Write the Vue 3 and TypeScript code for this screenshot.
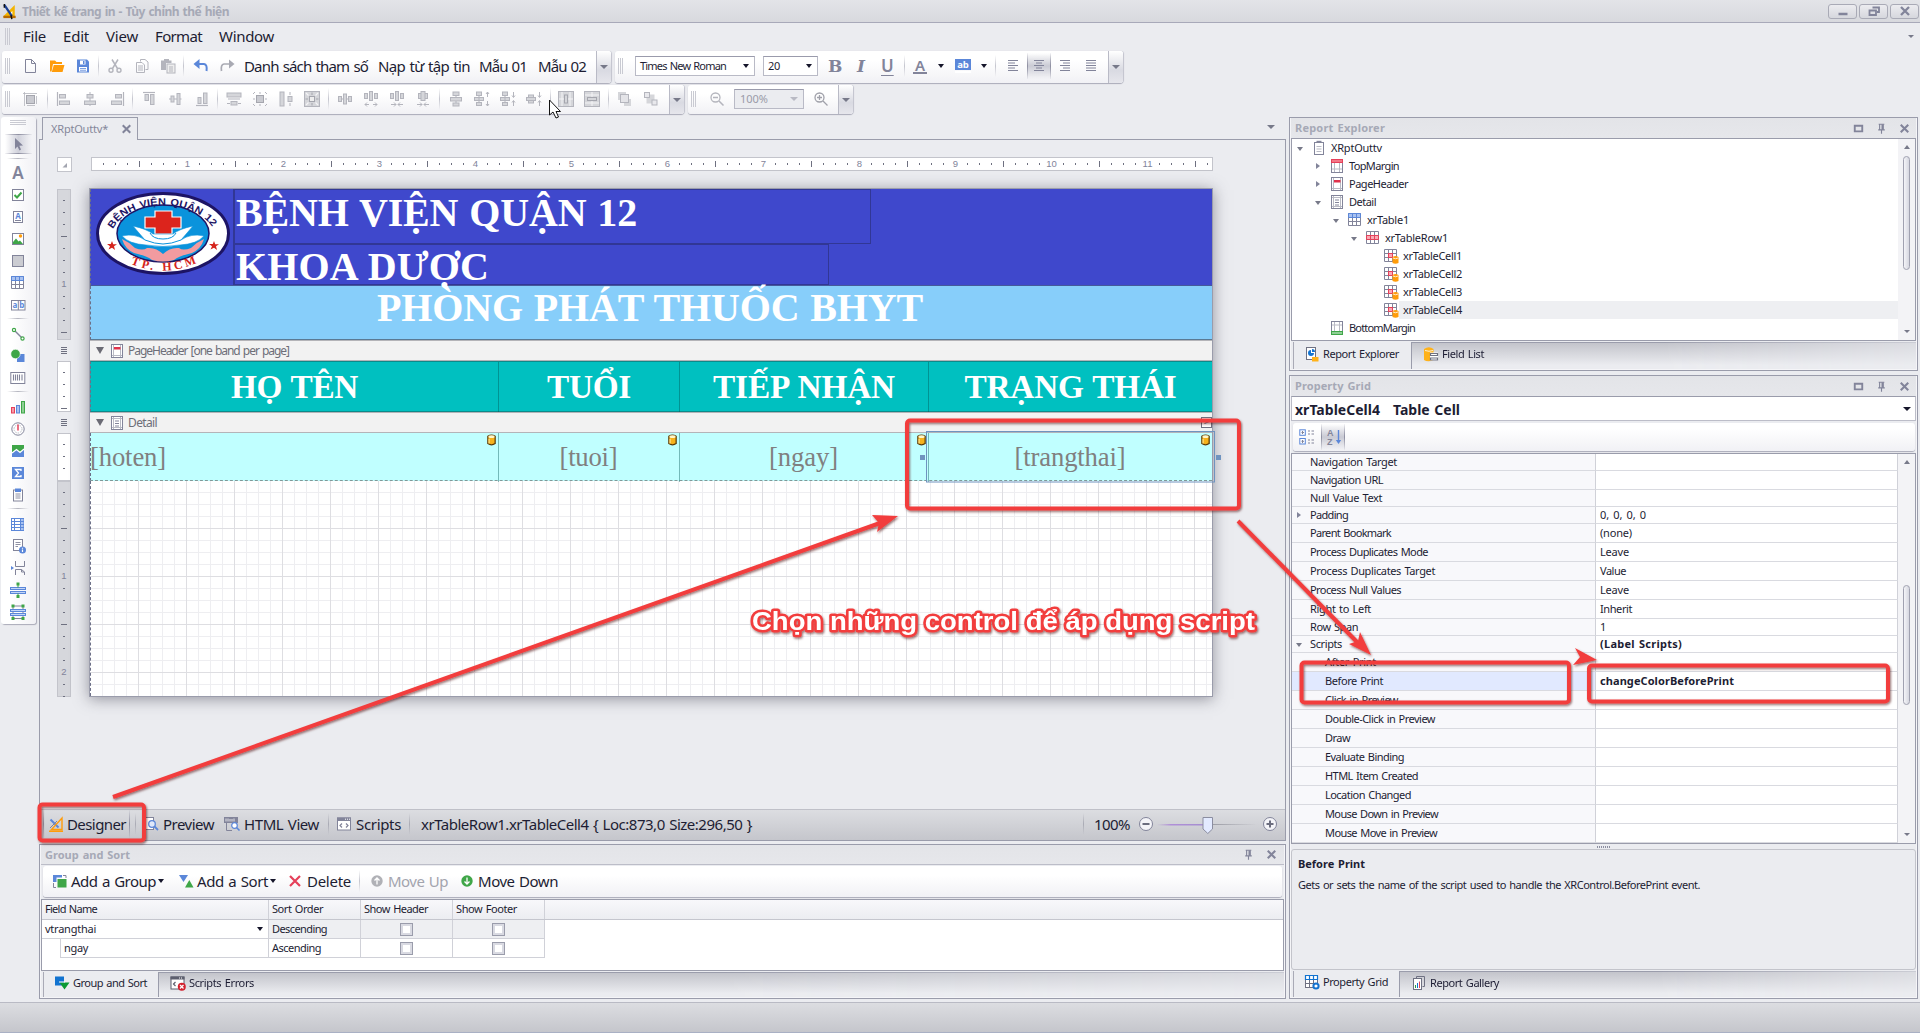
<script setup lang="ts">
import type { Directive } from 'vue'

// Spreads a label over its nominal width by adjusting the letter spacing.
const vFit: Directive<HTMLElement, number> = {
  mounted(el, { value }) {
    const n = (el.textContent ?? '').length
    const w = el.getBoundingClientRect().width
    if (n && w && value) el.style.letterSpacing = `${(value - w) / n}px`
  },
}

const G = '#82849a'
const D = '#b4b5bd'
const B = '#5b87d9'
const GR = '#3fa648'
const R = '#e5405a'
const O = '#ff9c0a'
const s = (c: string, d: string, w = 1) => `<path d="${d}" fill="none" stroke="${c}" stroke-width="${w}"/>`
const f = (c: string, d: string) => `<path d="${d}" fill="${c}"/>`
const r = (c: string, x: number, y: number, w: number, h: number, st = '') =>
  `<rect x="${x}" y="${y}" width="${w}" height="${h}" fill="${c}"${st ? ` stroke="${st}"` : ''}/>`
const cellGrid = s(G, 'M1.5 1.5H13.5V13.5H1.5ZM1.5 5.5H13.5M1.5 9.5H13.5M5.5 1.5V13.5M9.5 1.5V13.5')
const LG = '#d5d6da'

const icons: Record<string, string> = {
  app: f('#f4b400', 'M1 14L13 2V15H1Z') + f('#b86a00', 'M1 13.500H14V16H1Z') + f('#fff', 'M7 12L10.500 8.500V12Z') + s('#1b3f94', 'M2 2L10 14', 2.400) + s('#111', 'M2 1V5M9 13L10 17', 1.500),
  doc: s(G, 'M3.500 1.500H9.500L13.500 5.500V14.500H3.500ZM9.500 1.500V5.500H13.500'),
  folder: f(O, 'M1 2.500H6L7.500 4H13V6H4L2.500 13.500H1Z') + f(O, 'M4.800 7H15.500L13.500 14H2.800Z'),
  save: f(B, 'M2 1.500H12L14 3.500V14.500H2Z') + r('#fff', 5, 2.500, 5.500, 4) + r(B, 8, 3, 1.500, 3) + r('#fff', 4, 9, 8, 4.500) + r(B, 5, 10.200, 6, .8) + r(B, 5, 11.800, 6, .8),
  cut: s(D, 'M5 1.500L10.500 10.500M11 1.500L5.500 10.500', 1.500) + `<circle cx="4" cy="12.300" r="2" fill="none" stroke="${D}" stroke-width="1.400"/><circle cx="12" cy="12.300" r="2" fill="none" stroke="${D}" stroke-width="1.400"/>`,
  copy: s(D, 'M6.500 3.500V1.500H11L14 4V11.500H11.500') + s(D, 'M2.500 4.500H8L10.500 7V14.500H2.500Z') + s(D, 'M4 8H9M4 10H9M4 12H9'),
  paste: f(D, 'M1 2.500H4V1H9V2.500H11.500V5H6V12H1Z') + r('#eee', 7, 6, 8, 9, D) + s(D, 'M9 9H13M9 11H13M9 13H13'),
  undo: s(B, 'M4 6H11Q14.500 6.500 13.500 13', 2) + f(B, 'M.5 6L6.500 1V11Z'),
  redo: s('#a9aab3', 'M12 6H5Q1.500 6.500 2.500 13', 1.700) + f('#a9aab3', 'M15.500 6L10 1.500V10.500Z'),
  hl: r(B, 0, 1, 16, 11) + '<text x="8" y="9.500" font-size="9.500" font-weight="700" font-family="Open Sans, sans-serif" fill="#fff" text-anchor="middle">ab</text>' + r('#fff', 0, 13, 16, 2),
  al: s(G, 'M3 2.500H13M3 5H10M3 7.500H13M3 10H10M3 12.500H13', 1.200),
  ac: s(G, 'M3 2.500H13M5 5H11M3 7.500H13M5 10H11M3 12.500H13', 1.200),
  ar: s(G, 'M3 2.500H13M6 5H13M3 7.500H13M6 10H13M3 12.500H13', 1.200),
  aj: s(G, 'M3 2.500H13M3 5H13M3 7.500H13M3 10H13M3 12.500H13', 1.200),
  l0: r('#c9cad0', 4.500, 4.500, 8, 8, '#a5a6ae') + s(D, 'M1 2.500H15M2.500 1V15', .8) + s(D, 'M14.500 5V13M5 14.500H13', .8),
  l1: s(D, 'M1.500 1V15', 1.200) + r(LG, 3.500, 3.500, 6, 3.500, D) + r(LG, 3.500, 10, 10, 3.500, D),
  l2: r(LG, 5, 3.500, 6, 3.500, D) + r(LG, 2.500, 10, 11, 3.500, D) + s(D, 'M8 1V3M8 7V10M8 13V15'),
  l3: s(D, 'M14.500 1V15', 1.200) + r(LG, 6.500, 3.500, 6, 3.500, D) + r(LG, 2.500, 10, 10, 3.500, D),
  l4: s(D, 'M2 1.500H14', 1.200) + r(LG, 4, 3.500, 3.500, 6, D) + r(LG, 9.500, 3.500, 3.500, 10, D),
  l5: r(LG, 4, 5, 3, 6, D) + r(LG, 10, 2.500, 3, 11, D) + s(D, 'M2 8H4M7 8H10M13 8H14.500'),
  l6: s(D, 'M2 14.500H14', 1.200) + r(LG, 4, 6.500, 3, 6, D) + r(LG, 9.500, 2, 3.500, 10.500, D),
  l7: r(LG, 1, 2, 14, 4, D) + r(LG, 5, 10.500, 6, 3.500, D) + s(D, 'M1 12.500H4M12 12.500H15M2 8H14', 1),
  l8: r('#c9cad0', 4.500, 4.500, 7, 7, '#a5a6ae') + s(D, 'M1 8H3M13 8H15M8 1V3M8 13V15M1 3L3 1M13 1L15 3M1 13L3 15M13 15L15 13'),
  l9: r(LG, 2, 1, 4, 14, D) + r(LG, 10, 5.500, 4, 5, D) + s(D, 'M12 1V4M12 12V15'),
  l10: r(LG, .5, .5, 15, 15, D) + r('#eee', 5.500, 5.500, 5, 5, '#a5a6ae') + s('#a5a6ae', 'M8 1.500V4M8 12V14.500M1.500 8H4M12 8H14.500') + s('#f4f4f6', 'M2 2L4.500 4.500M11.500 4.500L14 2M2 14L4.500 11.500M11.500 11.500L14 14', 1.300),
  l11: r(LG, 1.500, 5.500, 3, 5, D) + r(LG, 6.500, 3, 3, 10, D) + r(LG, 11.500, 5.500, 3, 5, D) + s(D, 'M4 8H7M9 8H12'),
  l12: r(LG, 1.500, 2.500, 3, 5, D) + r(LG, 6.500, .5, 3, 9, D) + r(LG, 11.500, 2.500, 3, 5, D) + s(D, 'M2 13.500H6M10 13.500H14M4 11.500L2 13.500L4 15.500M12 11.500L14 13.500L12 15.500'),
  l13: r(LG, 1.500, 2.500, 3, 5, D) + r(LG, 6.500, .5, 3, 9, D) + r(LG, 11.500, 2.500, 3, 5, D) + s(D, 'M2 13.500H7M9 13.500H14M5 11.500L7 13.500L5 15.500M11 11.500L9 13.500L11 15.500'),
  l14: r(LG, 3.500, 2.500, 9, 5, D) + r(LG, 6, .5, 4, 9, D) + s(D, 'M2 13.500H7M9 13.500H14M5 11.500L7 13.500L5 15.500M11 11.500L9 13.500L11 15.500'),
  v0: r(LG, 5, 1, 6, 3.500, D) + r(LG, 2.500, 6.500, 11, 3.500, D) + r(LG, 5, 12, 6, 3, D) + s(D, 'M8 4V7M8 10V12'),
  v1: r(LG, 2.500, 1, 5, 3.500, D) + r(LG, .5, 6.500, 9, 3, D) + r(LG, 2.500, 11.500, 5, 3, D) + s(D, 'M13.500 1V6M13.500 10V15M12 3L13.500 1L15 3M12 13L13.500 15L15 13M5 4V12'),
  v2: r(LG, 2.500, 1, 5, 3.500, D) + r(LG, .5, 6.500, 9, 3, D) + r(LG, 2.500, 11.500, 5, 3, D) + s(D, 'M13.500 1V6M13.500 10V15M12 4.500L13.500 6.500L15 4.500M12 11.500L13.500 9.500L15 11.500M5 4V12'),
  v3: r(LG, 2.500, 4, 5, 8, D) + r(LG, .5, 6.500, 9, 3, D) + s(D, 'M13.500 1V6M13.500 10V15M12 4.500L13.500 6.500L15 4.500M12 11.500L13.500 9.500L15 11.500'),
  c0: r(LG, .5, .5, 15, 15, D) + s('#f4f4f6', 'M4 1V15M1 8H15M12 1V15', 1) + r(LG, 6.500, 4, 3, 8, '#a5a6ae'),
  c1: r(LG, .5, .5, 15, 15, D) + s('#f4f4f6', 'M8 1V15M1 4H15M1 12H15', 1) + r(LG, 3.500, 6.500, 9, 3, '#a5a6ae'),
  z0: r(LG, 1.500, 1.500, 7, 7, LG) + r(LG, 7.500, 8.500, 6, 6, LG) + r('#e4e4e8', 3.500, 3.500, 8, 8, D),
  z1: r(LG, 4, 4, 7, 8, LG) + r('#e8e8ec', 1.500, 1.500, 5, 5, D) + r('#e8e8ec', 9, 9, 5, 5, D),
  zm: `<circle cx="6.500" cy="6.500" r="4.500" fill="none" stroke="${D}" stroke-width="1.300"/>` + s(D, 'M4 6.500H9M10 10L14.500 14.500', 1.500),
  zp: `<circle cx="6.500" cy="6.500" r="4.500" fill="none" stroke="#a0a1aa" stroke-width="1.300"/>` + s('#a0a1aa', 'M4 6.500H9M6.500 4V9M10 10L14.500 14.500', 1.300),
  ptr: f(G, 'M5 2V13L7.500 10.500L9.500 14.500L11 13.500L9.300 9.800L13 9.500Z'),
  check: r('#fff', 2.500, 2.500, 11, 11, G) + s(GR, 'M4.500 8L7 10.500L11.500 5.500', 2),
  rich: r('#fff', 3.500, 2.500, 9, 11, G) + '<text x="8" y="9.500" font-size="8" font-weight="700" font-family="Open Sans, sans-serif" fill="#5b87d9" text-anchor="middle">A</text>' + s(G, 'M5 11.500H11'),
  pic: r('#fff', 2.500, 2.500, 11, 11, G) + f(GR, 'M3 11L6 7.500L8.500 10.500L10 9.500L13 13H3Z') + `<circle cx="10.500" cy="5" r="1.700" fill="${O}"/>`,
  panel: r('#cbccd2', 2.500, 2.500, 11, 11, G),
  table: r('#fff', 2, 2, 12, 12) + r('#a9c2f0', 2, 2, 12, 3.500) + cellGrid + s(B, 'M1.500 5.500V1.500H13.500V5.500ZM5.500 1.500V5.500M9.500 1.500V5.500'),
  comb: r('#fff', 1.500, 3.500, 13.500, 9.500, G) + s(G, 'M8.300 3V13') + '<text x="5" y="11" font-size="8" font-weight="700" font-family="Open Sans, sans-serif" fill="#5b87d9" text-anchor="middle">a</text><text x="11.700" y="11" font-size="8" font-weight="700" font-family="Open Sans, sans-serif" fill="#5b87d9" text-anchor="middle">b</text>',
  line: s(G, 'M4 4L12 12', 1.500) + `<circle cx="4" cy="4" r="1.600" fill="#fff" stroke="${GR}" stroke-width="1.200"/><circle cx="12.500" cy="12.500" r="1.600" fill="#fff" stroke="${GR}" stroke-width="1.200"/>`,
  shape: r(B, 7, 6, 7.500, 8) + `<circle cx="5.500" cy="6" r="4.700" fill="${GR}" stroke="#fff" stroke-width=".6"/>`,
  bar: r('#fff', .8, 2.500, 14, 11, G) + s(G, 'M3.500 4.500V10.500M5.500 4.500V10.500M7.500 4.500V10.500M9.500 4.500V10.500M12 4.500V10.500', 1.100),
  chart: r('#f39aa8', 1.500, 8.500, 3, 5.500, R) + r('#a9c2f0', 6.500, 6.500, 3, 7.500, B) + r('#8fcf95', 11.500, 2.500, 3, 11.500, GR),
  gauge: `<circle cx="8" cy="8" r="6.200" fill="#fff" stroke="${G}"/><circle cx="8" cy="8" r="4" fill="none" stroke="#b9bac4" stroke-dasharray="1.500 1"/>` + s(R, 'M8 3.500V9.500', 1.500),
  spark: r(B, 2, 2, 12, 12) + f(GR, 'M2 2H14V6L10.500 9.500L6.500 6.500L2 10Z') + s('#fff', 'M2 10L6.500 6.500L10 9.500L14 6', 1.300),
  sigma: r(B, 2, 2, 12, 12) + s('#fff', 'M11 6V4.500H5.500L8.500 8L5.500 11.500H11V10', 1.300),
  clip: r('#fff', 3.500, 3, 9, 11, G) + r(B, 5, 1.500, 6, 3.500) + s(G, 'M5.500 7H10.500M5.500 9H10.500M5.500 11H10.500', .9),
  tbl2: r('#fff', 1.500, 2.500, 12, 12, B) + r('#a9c2f0', 10.500, 3, 3, 11) + s(B, 'M2 5.500H14M2 8.500H14M2 11.500H14') + s(B, 'M4.500 2V14M10.500 2V14'),
  info: r('#fff', 3.500, 1.500, 9, 11, G) + s(G, 'M5.500 4.500H10.500M5.500 6.500H10.500M5.500 8.500H8', .9) + `<circle cx="12.500" cy="12" r="3.500" fill="${B}"/>` + s('#fff', 'M12.500 9.800V10.800M12.500 11.500V14', 1.200),
  brk: f(B, 'M1 6L4 8L1 10Z') + s(G, 'M5.500 1V6.500H14.500V1M5.500 15V9.500H11.500L14.500 12V15M11.500 9.500V12H14.500'),
  cbl: r('#c4d6f8', .5, 5.500, 15, 2, B) + r('#c4d6f8', .5, 9.500, 15, 2, B) + s(GR, 'M8 2.500V5.500M8 11.500V14') + f(GR, 'M6.500 .5H9.500V3.500H6.500ZM6.500 13H9.500V16H6.500Z'),
  cbb: s(G, 'M3 2V14.500H13V2Z') + r('#c4d6f8', .5, 5.500, 15, 2, B) + r('#c4d6f8', .5, 9.500, 15, 2, B) + f(GR, 'M1.500 .5H4.500V3.500H1.500ZM11.500 .5H14.500V3.500H11.500ZM1.500 13H4.500V16H1.500ZM11.500 13H14.500V16H11.500Z'),
  rpt: r('#fff', 3.500, 2.500, 9, 12, G) + r(G, 5.500, .8, 5, 2) + s('#b9bac4', 'M5.500 6.500H10.500M5.500 9H10.500M5.500 11.500H10.500'),
  top: r('#fff', 2.500, 1.500, 11, 13, G) + s('#b9bac4', 'M5.500 5V14M10.500 5V14M3 11H13') + r('#f37787', 2.500, 1.500, 11, 3, R),
  ph: r('#fff', 2.500, 1.500, 11, 13, G) + s('#b9bac4', 'M4.500 2V14M11.500 2V14M3 12.500H13') + r('#e0324c', 5, 4, 6.500, 2.500),
  det: r('#fff', 2.500, 1.500, 11, 13, G) + s('#b9bac4', 'M4.500 2V14M11.500 2V14M3 12.500H13M3 3.500H13') + s(G, 'M6 6H10M6 8.500H10M6 11H10'),
  bot: r('#fff', 2.500, 1.500, 11, 13, G) + s('#b9bac4', 'M5.500 2V11M10.500 2V11M3 5H13') + r('#8fcf95', 2.500, 11.500, 11, 3, GR),
  row: r('#fff', 2, 2, 12, 12) + r('#f8aab5', 2, 6, 12, 3.500) + cellGrid + s(R, 'M1.500 5.500H13.500V9.500H1.500ZM5.500 5.500V9.500M9.500 5.500V9.500'),
  cell: r('#fff', 2, 2, 12, 12) + cellGrid + r('#f8aab5', 5.500, 5.500, 4, 4, R) + f(O, 'M9.500 9Q12.500 7 15.500 9V15Q12.500 16.500 9.500 15Z') + s('#fff', 'M10 10Q12.500 11.500 15 10', .8),
  rexp: r('#fff', 2.500, 1.500, 9, 12, '#6f7182') + f('#1273d0', 'M7 4A3 3 0 1 0 10 7H7Z') + f('#1273d0', 'M8 3A3 3 0 0 1 11 6H8Z') + r('#ffb21a', 8, 11, 6.500, 4.500),
  flist: f('#ffb21a', 'M1 3Q6 -.5 10.500 3V14Q5 16.500 1 14Z') + s('#fff', 'M2 4.500Q6 6 10 4.500', .8) + r('#fff', 7, 6.500, 8, 8) + s('#6f7182', 'M7.500 7.500H14.500V9.500H7.500ZM7.500 12H14.500V14H7.500Z', 1.200),
  pgrid: r('#fff', 1.500, 1.500, 12, 12, '#6f7182') + s('#6f7182', 'M1.500 9.500H13.500M5.500 5V13.500M9.500 5V13.500') + s('#1273d0', 'M1.500 5.500V1.500H13.500V5.500ZM5.500 1.500V5.500M9.500 1.500V5.500', 1.200) + `<circle cx="12" cy="12" r="2.600" fill="#fff" stroke="#1273d0" stroke-width="2"/>`,
  gallery: s('#6f7182', 'M5.500 3.500V1.500H13.500V11.500H11.500') + r('#fff', 2.500, 3.500, 8, 11, '#6f7182') + s('#2a9c40', 'M4.500 10V13') + s('#1273d0', 'M6.500 8V13') + s(R, 'M8.500 6.500V13'),
  cat: r('#fff', .8, .8, 5.500, 5.500, B) + r('#fff', .8, 9.500, 5.500, 5.500, B) + s(G, 'M2.500 3.500H5M3.500 2V5M2.500 12.300H5M3.500 11V14M9 2H11M12.500 2H15M9 5H11M12.500 5H15M9 11H11M12.500 11H15M9 14H11M12.500 14H15'),
  az: '<text x="0" y="7" font-size="9" font-weight="600" font-family="Liberation Sans, sans-serif" fill="#82849a">A</text><text x="0" y="16" font-size="9" font-weight="600" font-family="Liberation Sans, sans-serif" fill="#82849a">Z</text>' + s(B, 'M11.500 1V13', 1.400) + f(B, 'M8.800 11H14.200L11.500 15Z'),
  group: f(B, 'M2 2H11V4.500H5.500V9H2Z') + r(GR, 6.500, 6, 9, 8.500) + s(G, 'M2.500 10V14.500H5M12 2.500H15V5', 1),
  sort: f(B, 'M1 2H10L5.500 9Z') + f(GR, 'M7 14.500H15.500L11.300 7Z'),
  del: s(R, 'M3 3L13 13M13 3L3 13', 2.200),
  up: `<circle cx="8" cy="8" r="5.700" fill="#b0b1b6"/>` + s('#fff', 'M8 11.500V5M5.500 7.500L8 5L10.500 7.500', 1.300),
  down: `<circle cx="8" cy="8" r="5.700" fill="${GR}"/>` + s('#fff', 'M8 4.500V11M5.500 8.500L8 11L10.500 8.500', 1.300),
  designer: s(B, 'M2.500 3.500L10.500 11.500', 2) + s(O, 'M14 2V13.500H3.500ZM1 15.200H15', 1.400) + s(G, 'M2 12L9 5', 1),
  preview: r('#fff', 1.500, 1.500, 9, 12, G) + `<circle cx="9" cy="8" r="3.300" fill="#dfe8fa" stroke="${B}" stroke-width="1.300"/>` + s(B, 'M11.500 10.500L15 14', 1.800),
  html: r(G, 0, 1, 14, 6) + s('#fff', 'M2 2.500V5.500M4 2.500V5.500M6 3V5.500M8 3V5.500M10 2.500V5.500', .8) + s(G, 'M2.500 7V14.500H8') + `<circle cx="10.500" cy="9.500" r="2.800" fill="#fff" stroke="${B}" stroke-width="1.200"/>` + s(B, 'M12.500 11.500L15.500 14.500', 1.600),
  script: r('#fff', 1.500, 2, 13, 12, G) + r(G, 1, 1.500, 14, 3.500) + s('#fff', 'M9 3.200H10M11 3.200H12M13 3.200H14', 1) + s(G, 'M6 7.500L4 9.500L6 11.500M10 7.500L12 9.500L10 11.500', 1.200),
  serr: r('#fff', 1, 2, 13, 12, '#5d5f6e') + r('#5d5f6e', .5, 1.500, 14, 3) + s('#fff', 'M9 3H10M11 3H12', 1) + s('#5d5f6e', 'M5.500 7L3.500 9L5.500 11', 1.200) + '<circle cx="11.800" cy="11.800" r="4" fill="#d3202e"/>' + s('#fff', 'M10 10L13.500 13.500M13.500 10L10 13.500', 1.300),
  gsort: r('#1273d0', 1, 1.500, 9, 9) + f('#0a9a33', 'M5.500 7.500H15.500L10.500 14.500Z') + s('#fff', 'M5 7H11', 1),
  pin: s(G, 'M5 3.500H11M6 3V9.500M4.500 9.500H11.500M8 10V13.500', 1.200) + r(G, 8, 3.500, 2.500, 6),
  max: s(G, 'M4 5H12V11H4Z', 2),
  x: s(G, 'M4 4L12 12M12 4L4 12', 2.200),
  db: '<path d="M3.500 4Q8 1 12.500 4V13Q8 16 3.500 13Z" fill="#f6b21c" stroke="#5b3a06" stroke-width="1.500"/><ellipse cx="8" cy="4.500" rx="3.800" ry="1.800" fill="#fff6c8"/><path d="M5 7V13" stroke="#ffe28a" stroke-width="1.500"/>',
}

type Item = { t: 'i' | 's' | 'l' | 'g'; n?: string; w: number; f?: number }
const i = (n: string, w = 26): Item => ({ t: 'i', n, w })
const sp = (w = 7): Item => ({ t: 's', w })
const gap = (w: number): Item => ({ t: 'g', w })
const lb = (n: string, fw: number, w: number): Item => ({ t: 'l', n, w, f: fw })

const mainBar: Item[] = [gap(1), i('doc', 26), i('folder', 27), i('save', 25), sp(7), i('cut', 26), i('copy', 27), i('paste', 25), sp(7), i('undo', 27), i('redo', 26), gap(4),
  lb('Danh sách tham số', 124, 134), lb('Nạp từ tập tin', 92, 101), lb('Mẫu 01', 48, 59), lb('Mẫu 02', 48, 58)]
const layoutBar: Item[] = [i('l0', 28), sp(7), ...['l1', 'l2', 'l3'].map(n => i(n, 26.3)), sp(6), ...['l4', 'l5', 'l6'].map(n => i(n, 26.3)), sp(6),
  ...['l7', 'l8', 'l9', 'l10'].map(n => i(n, 26.100)), sp(6.5), ...['l11', 'l12', 'l13', 'l14'].map(n => i(n, 26.100)), sp(6.5),
  ...['v0', 'v1', 'v2', 'v3'].map(n => i(n, 26.100)), sp(6.5), i('c0'), i('c1'), sp(7), i('z0'), i('z1')]

const menu: [string, number, number][] = [['File', 23, 17], ['Edit', 26, 17], ['View', 32, 17], ['Format', 47, 17], ['Window', 55, 0]]

const tools: (string | null)[] = [null, 'A', 'check', 'rich', 'pic', 'panel', 'table', 'comb', null, 'line', 'shape', 'bar', null, 'chart', 'gauge', 'spark', 'sigma', 'clip', null, 'tbl2', 'info', 'brk', 'cbl', 'cbb']

const hTicks = Array.from({ length: 93 }, (_, k) => k + 1)
type Sect = { h: number; n: number; off: number; gray: boolean }
const sects: Sect[] = [
  { h: 151, n: 12, off: -1, gray: true },
  { h: 51, n: 4, off: -1, gray: false },
  { h: 48, n: 3, off: -1, gray: false },
  { h: 216, n: 18, off: -1, gray: true },
]

const heads: [string, number][] = [['HỌ TÊN', 127], ['TUỔI', 84], ['TIẾP NHẬN', 182], ['TRẠNG THÁI', 212]]
const cells: [string, number][] = [['[hoten]', 76], ['[tuoi]', 58], ['[ngay]', 69], ['[trangthai]', 111]]

type Node = { d: number; a: string; ic: string; t: string; w: number; sel?: boolean }
const tree: Node[] = [
  { d: 0, a: 'd', ic: 'rpt', t: 'XRptOuttv', w: 51 },
  { d: 1, a: 'r', ic: 'top', t: 'TopMargin', w: 50 },
  { d: 1, a: 'r', ic: 'ph', t: 'PageHeader', w: 59 },
  { d: 1, a: 'd', ic: 'det', t: 'Detail', w: 27 },
  { d: 2, a: 'd', ic: 'table', t: 'xrTable1', w: 42 },
  { d: 3, a: 'd', ic: 'row', t: 'xrTableRow1', w: 63 },
  { d: 4, a: '', ic: 'cell', t: 'xrTableCell1', w: 59 },
  { d: 4, a: '', ic: 'cell', t: 'xrTableCell2', w: 59 },
  { d: 4, a: '', ic: 'cell', t: 'xrTableCell3', w: 59 },
  { d: 4, a: '', ic: 'cell', t: 'xrTableCell4', w: 59, sel: true },
  { d: 1, a: '', ic: 'bot', t: 'BottomMargin', w: 66 },
]

type Prop = { n: string; w: number; v?: string; vw?: number; h: number; c?: boolean; a?: string; b?: boolean; sel?: boolean }
const props: Prop[] = [
  { n: 'Navigation Target', w: 87, h: 17 },
  { n: 'Navigation URL', w: 73, h: 19 },
  { n: 'Null Value Text', w: 72, h: 17 },
  { n: 'Padding', w: 38, v: '0, 0, 0, 0', vw: 46, h: 17, a: 'r' },
  { n: 'Parent Bookmark', w: 81, v: '(none)', vw: 32, h: 19 },
  { n: 'Process Duplicates Mode', w: 118, v: 'Leave', vw: 29, h: 19 },
  { n: 'Process Duplicates Target', w: 125, v: 'Value', vw: 26, h: 19 },
  { n: 'Process Null Values', w: 91, v: 'Leave', vw: 29, h: 19 },
  { n: 'Right to Left', w: 61, v: 'Inherit', vw: 32, h: 19 },
  { n: 'Row Span', w: 48, v: '1', vw: 7, h: 17 },
  { n: 'Scripts', w: 32, v: '(Label Scripts)', vw: 82, h: 17, a: 'd', b: true },
  { n: 'After Print', w: 51, h: 19, c: true },
  { n: 'Before Print', w: 58, v: 'changeColorBeforePrint', vw: 134, h: 19, c: true, b: true, sel: true },
  { n: 'Click in Preview', w: 73, h: 19, c: true },
  { n: 'Double-Click in Preview', w: 110, h: 19, c: true },
  { n: 'Draw', w: 25, h: 19, c: true },
  { n: 'Evaluate Binding', w: 79, h: 19, c: true },
  { n: 'HTML Item Created', w: 93, h: 19, c: true },
  { n: 'Location Changed', w: 86, h: 19, c: true },
  { n: 'Mouse Down in Preview', w: 113, h: 19, c: true },
  { n: 'Mouse Move in Preview', w: 112, h: 19, c: true },
]
</script>

<template>
  <div class="app">
    <header class="title">
      <svg class="ico appico" viewBox="0 0 16 18" v-html="icons.app"></svg>
      <span class="tt"><span v-fit="207">Thiết kế trang in - Tùy chỉnh thể hiện</span></span>
      <div class="winbtns">
        <span><svg viewBox="0 0 16 14"><path d="M3.500 10H12.500" stroke="#82849a" stroke-width="2.500" /></svg></span>
        <span><svg viewBox="0 0 16 14"><path d="M6.500 3.500H13V8H11M3.500 6.500H10V11H3.500Z" fill="none" stroke="#82849a" stroke-width="1.800" /></svg></span>
        <span><svg viewBox="0 0 16 14"><path d="M4 3L12 11M12 3L4 11" fill="none" stroke="#82849a" stroke-width="2.300" /></svg></span>
      </div>
    </header>

    <nav class="menu">
      <i class="grip"></i>
      <span v-for="m in menu" :key="m[0]" class="mi" :style="{ width: m[1] + 'px', marginRight: m[2] + 'px' }"><span v-fit="m[1]">{{ m[0] }}</span></span>
      <i class="tri marrow"></i>
    </nav>

    <div class="bars">
      <div class="bar b1">
        <i class="grip"></i>
        <template v-for="(it, k) in mainBar" :key="k">
          <span class="slot" :class="it.t" :style="{ width: it.w + 'px' }">
            <svg v-if="it.t === 'i'" class="ico" viewBox="0 0 16 16" v-html="icons[it.n!]"></svg>
            <span v-else-if="it.t === 'l'" v-fit="it.f!">{{ it.n }}</span>
          </span>
        </template>
        <span class="strip"><i class="tri"></i></span>
      </div>
      <div class="bar b2">
        <i class="grip"></i>
        <span class="combo fc"><span v-fit="86">Times New Roman</span><i class="tri k"></i></span>
        <span class="combo sc"><span v-fit="12">20</span><i class="tri k"></i></span>
        <span class="fmt bb">B</span><span class="fmt ii">I</span><span class="fmt uu">U</span>
        <span class="slot s s1"></span>
        <span class="fmt aa">A</span><i class="tri k m1"></i>
        <svg class="ico hl" viewBox="0 0 16 16" v-html="icons.hl"></svg><i class="tri k m2"></i>
        <span class="slot s s2"></span>
        <span class="al"><svg class="ico" viewBox="0 0 16 16" v-html="icons.al"></svg></span>
        <span class="al on"><svg class="ico" viewBox="0 0 16 16" v-html="icons.ac"></svg></span>
        <span class="al"><svg class="ico" viewBox="0 0 16 16" v-html="icons.ar"></svg></span>
        <span class="al"><svg class="ico" viewBox="0 0 16 16" v-html="icons.aj"></svg></span>
        <span class="strip"><i class="tri"></i></span>
      </div>
    </div>
    <div class="bars low">
      <div class="bar b3">
        <i class="grip"></i>
        <template v-for="(it, k) in layoutBar" :key="k">
          <span class="slot" :class="it.t" :style="{ width: it.w + 'px' }">
            <svg v-if="it.t === 'i'" class="ico" viewBox="0 0 16 16" v-html="icons[it.n!]"></svg>
          </span>
        </template>
        <span class="strip"><i class="tri"></i></span>
      </div>
      <div class="bar b4">
        <i class="grip"></i>
        <svg class="ico zm" viewBox="0 0 16 16" v-html="icons.zm"></svg>
        <span class="combo zc"><span v-fit="28">100%</span><i class="tri lt"></i></span>
        <svg class="ico zp" viewBox="0 0 16 16" v-html="icons.zp"></svg>
        <span class="strip"><i class="tri"></i></span>
      </div>
    </div>

    <main class="main">
      <aside class="toolbox">
        <i class="vgrip"></i>
        <span class="tool on"><svg class="ico" viewBox="0 0 16 16" v-html="icons.ptr"></svg></span>
        <template v-for="(t, k) in tools" :key="k">
          <i v-if="!t" class="tsep" :class="{ first: k === 0 }"></i>
          <span v-else-if="t === 'A'" class="tool lblA">A</span>
          <span v-else class="tool"><svg class="ico" viewBox="0 0 16 16" v-html="icons[t]"></svg></span>
        </template>
      </aside>

      <section class="center">
        <div class="tabs">
          <div class="tab"><span v-fit="57">XRptOuttv*</span><svg class="ico x" viewBox="0 0 16 16" v-html="icons.x"></svg></div>
          <i class="tri darrow"></i>
        </div>
        <div class="doc">
          <div class="hr">
            <span class="corner"><svg width="14" height="14"><path d="M9 5V9.500H4.500Z" fill="#a3a5b0" /></svg></span>
            <svg class="hruler" width="1122" height="14">
              <rect x=".5" y=".5" width="1121" height="13" fill="#fff" stroke="#c3c4cb" />
              <template v-for="k in hTicks" :key="k">
                <text v-if="k % 8 === 0" :x="k * 12 + .5" y="10" text-anchor="middle">{{ k / 8 }}</text>
                <rect v-else-if="k % 4 === 0" :x="k * 12" y="4" width="1" height="6" fill="#6e7080" />
                <rect v-else :x="k * 12" y="6" width="1" height="2" fill="#6e7080" />
              </template>
            </svg>
          </div>
          <div class="canvas">
            <div class="vruler">
              <template v-for="(sct, q) in sects" :key="q">
                <svg :width="14" :height="sct.h">
                  <rect x=".5" y=".5" width="13" :height="sct.h - 1" :fill="sct.gray ? '#d6d7dc' : '#fff'" stroke="#c3c4cb" />
                  <template v-for="k in sct.n" :key="k">
                    <text v-if="k % 8 === 0" x="7" :y="k * 12 + 2" text-anchor="middle">{{ k / 8 }}</text>
                    <rect v-else-if="k % 4 === 0" x="4" :y="k * 12 + sct.off" width="6" height="1" fill="#6e7080" />
                    <rect v-else x="6" :y="k * 12 + sct.off" width="2" height="1" fill="#6e7080" />
                  </template>
                </svg>
                <svg v-if="q < 2" width="14" height="21"><path d="M4 7.500H10M4 9.500H10M4 11.500H10M4 13.500H10" stroke="#6e7080" /></svg>
              </template>
            </div>
            <div class="page">
              <div class="blue">
                <div class="logo">
                  <svg width="136" height="84" viewBox="0 0 136 84">
                    <defs>
                      <path id="arcTop" d="M18 37 C34 5 101 5 119 38 L124 50" />
                      <path id="arcBot" d="M32 70 Q67 87 104 70 L112 66" />
                    </defs>
                    <ellipse cx="68" cy="41.500" rx="65.500" ry="40" fill="#fff" stroke="#1d1464" stroke-width="3" />
                    <ellipse cx="68" cy="41.500" rx="46" ry="28.500" fill="#0a93dc" stroke="#1d1464" stroke-width="1.500" />
                    <path d="M60 19H77V25H86V36H77V42H60V36H50V25H60Z" fill="#dc241c" stroke="#fff" stroke-width="1.200" />
                    <path d="M27 44Q40 41 50 48L38 34Q52 37 58 42H78Q84 37 98 34L86 48Q96 41 109 44Q102 52 85 53Q68 56 51 53Q34 52 27 44Z" fill="#fff" stroke="#0a93dc" stroke-width=".6" />
                    <path d="M50 48Q60 52 68 52Q76 52 86 48M55 41Q58 47 68 47Q78 47 81 41" fill="none" stroke="#0a93dc" stroke-width="1" />
                    <path d="M27 47Q34 50 40 56Q48 59 52 56Q61 55 68 62Q75 55 84 56Q88 59 96 56Q102 50 109 47Q106 57 97 61Q84 64 79 68Q68 71 57 68Q52 64 39 61Q30 57 27 47Z" fill="#f29ba0" />
                    <path d="M17 49L18.200 52.200H22L19 54.300L20 58L17 55.700L13.500 57.500L15 54.200L12 52H15.800ZM119 49L120.200 52.200H124L121 54.300L122 58L119 55.700L115.500 57.500L117 54.200L114 52H117.800Z" fill="#d5241c" />
                    <text font-family="Liberation Sans, sans-serif" font-weight="700" font-size="10" fill="#1d1464"><textPath href="#arcTop" startOffset="0" textLength="114" lengthAdjust="spacingAndGlyphs">BỆNH VIỆN QUẬN 12</textPath></text>
                    <text font-family="Liberation Serif, serif" font-weight="700" font-size="12" fill="#d5241c"><textPath href="#arcBot" startOffset="4" textLength="68">TP. HCM</textPath></text>
                  </svg>
                </div>
                <div class="blines">
                  <div class="bl1"><span v-fit="401">BỆNH VIỆN QUẬN 12</span></div>
                  <div class="bl2"><span v-fit="253">KHOA DƯỢC</span></div>
                </div>
              </div>
              <div class="sky"><span v-fit="546">PHÒNG PHÁT THUỐC BHYT</span></div>
              <div class="band">
                <i></i><svg class="ico" viewBox="0 0 16 16" v-html="icons.ph"></svg><span v-fit="161">PageHeader [one band per page]</span>
              </div>
              <div class="row teal"><div v-for="h in heads" :key="h[0]"><span v-fit="h[1]">{{ h[0] }}</span></div></div>
              <div class="band">
                <i></i><svg class="ico" viewBox="0 0 16 16" v-html="icons.det"></svg><span v-fit="29">Detail</span><b>&gt;</b>
              </div>
              <div class="row cyan">
                <div v-for="c in cells" :key="c[0]"><span v-fit="c[1]">{{ c[0] }}</span><svg class="db" viewBox="0 0 16 16" v-html="icons.db"></svg></div>
              </div>
              <div class="paper"></div>
            </div>
          </div>
          <div class="status">
            <span class="dbtn"><svg class="ico" viewBox="0 0 16 16" v-html="icons.designer"></svg><span v-fit="59">Designer</span></span>
            <i class="vs"></i>
            <svg class="ico pv" viewBox="0 0 16 16" v-html="icons.preview"></svg><span class="st w1"><span v-fit="51">Preview</span></span>
            <svg class="ico ht" viewBox="0 0 16 16" v-html="icons.html"></svg><span class="st w2"><span v-fit="75">HTML View</span></span>
            <i class="vs"></i>
            <svg class="ico sr" viewBox="0 0 16 16" v-html="icons.script"></svg><span class="st w3"><span v-fit="45">Scripts</span></span>
            <i class="vs"></i>
            <span class="st w4"><span v-fit="331">xrTableRow1.xrTableCell4 { Loc:873,0 Size:296,50 }</span></span>
            <i class="vs"></i>
            <span class="st w5"><span v-fit="36">100%</span></span>
            <svg class="slider" width="142" height="24" viewBox="0 0 142 24">
              <defs><linearGradient id="lv"><stop offset="0" stop-color="#b39ad0" stop-opacity="0" /><stop offset=".3" stop-color="#b08fd8" /><stop offset="1" stop-color="#a58ed0" /></linearGradient>
                <linearGradient id="gv"><stop offset="0" stop-color="#9a9ba4" /><stop offset="1" stop-color="#9a9ba4" stop-opacity="0" /></linearGradient></defs>
              <rect x="20" y="12" width="46" height="1.500" fill="url(#lv)" /><rect x="74" y="12" width="46" height="1" fill="url(#gv)" />
              <circle cx="9" cy="12" r="6.500" fill="#f4f4f8" stroke="#82849a" /><path d="M5.500 12H12.500" stroke="#6b6d7e" stroke-width="2" />
              <circle cx="133" cy="12" r="6.500" fill="#f4f4f8" stroke="#82849a" /><path d="M129.500 12H136.500M133 8.500V15.500" stroke="#6b6d7e" stroke-width="2" />
              <path d="M66 5.500H75.500V17L70.800 21.500L66 17Z" fill="#e3eaff" stroke="#8b8da0" />
            </svg>
          </div>
        </div>

        <div class="dock gs">
          <div class="phead"><span v-fit="85">Group and Sort</span><svg class="ico p" viewBox="0 0 16 16" v-html="icons.pin"></svg><svg class="ico" viewBox="0 0 16 16" v-html="icons.x"></svg></div>
          <div class="gbar">
            <svg class="ico" viewBox="0 0 16 16" v-html="icons.group"></svg><span class="st g1"><span v-fit="85">Add a Group</span></span><i class="tri k"></i>
            <svg class="ico q1" viewBox="0 0 16 16" v-html="icons.sort"></svg><span class="st g2"><span v-fit="71">Add a Sort</span></span><i class="tri k"></i>
            <svg class="ico q2" viewBox="0 0 16 16" v-html="icons.del"></svg><span class="st g3"><span v-fit="44">Delete</span></span>
            <i class="slot s"></i>
            <svg class="ico q3" viewBox="0 0 16 16" v-html="icons.up"></svg><span class="st g4"><span v-fit="60">Move Up</span></span>
            <svg class="ico q4" viewBox="0 0 16 16" v-html="icons.down"></svg><span class="st g5"><span v-fit="80">Move Down</span></span>
          </div>
          <div class="gtable">
            <div class="tr th"><div><span v-fit="52">Field Name</span></div><div><span v-fit="51">Sort Order</span></div><div><span v-fit="64">Show Header</span></div><div><span v-fit="61">Show Footer</span></div></div>
            <div class="tr r1"><div><span v-fit="51">vtrangthai</span><i class="tri k"></i></div><div><span v-fit="55">Descending</span></div><div><i class="cb"></i></div><div><i class="cb"></i></div></div>
            <div class="tr r2"><div><span v-fit="24">ngay</span></div><div><span v-fit="49">Ascending</span></div><div><i class="cb"></i></div><div><i class="cb"></i></div></div>
          </div>
          <div class="ptabs">
            <div class="pt on g"><svg class="ico" viewBox="0 0 16 16" v-html="icons.gsort"></svg><span v-fit="74">Group and Sort</span></div>
            <div class="pt off"><svg class="ico" viewBox="0 0 16 16" v-html="icons.serr"></svg><span v-fit="65">Scripts Errors</span></div>
          </div>
        </div>
      </section>

      <section class="right">
        <div class="dock re">
          <div class="phead"><span v-fit="90">Report Explorer</span><svg class="ico m" viewBox="0 0 16 16" v-html="icons.max"></svg><svg class="ico p" viewBox="0 0 16 16" v-html="icons.pin"></svg><svg class="ico" viewBox="0 0 16 16" v-html="icons.x"></svg></div>
          <div class="tree">
            <div class="nodes">
              <div v-for="n in tree" :key="n.t" class="node" :style="{ paddingLeft: n.d * 18 + 'px' }">
                <i class="ar" :class="n.a"></i>
                <svg class="ico" viewBox="0 0 16 16" v-html="icons[n.ic]"></svg>
                <div class="nt" :class="{ sel: n.sel }"><span v-fit="n.w">{{ n.t }}</span></div>
              </div>
            </div>
            <div class="sb"><i class="ua"></i><b class="th1"></b><i class="tri"></i></div>
          </div>
          <div class="ptabs">
            <div class="pt on e"><svg class="ico" viewBox="0 0 16 16" v-html="icons.rexp"></svg><span v-fit="76">Report Explorer</span></div>
            <div class="pt off"><svg class="ico" viewBox="0 0 16 16" v-html="icons.flist"></svg><span v-fit="42">Field List</span></div>
          </div>
        </div>

        <div class="dock pg">
          <div class="phead"><span v-fit="76">Property Grid</span><svg class="ico m" viewBox="0 0 16 16" v-html="icons.max"></svg><svg class="ico p" viewBox="0 0 16 16" v-html="icons.pin"></svg><svg class="ico" viewBox="0 0 16 16" v-html="icons.x"></svg></div>
          <div class="obj"><span class="o1"><span v-fit="85">xrTableCell4</span></span><span v-fit="67">Table Cell</span><i class="tri k"></i></div>
          <div class="pbar"><svg class="ico" viewBox="0 0 16 16" v-html="icons.cat"></svg><span class="al on"><svg class="ico" viewBox="0 0 16 16" v-html="icons.az"></svg></span></div>
          <div class="grid">
            <div class="rows">
              <div v-for="p in props" :key="p.n" class="pr" :class="{ sel: p.sel, c: p.c }" :style="{ height: p.h + 'px' }">
                <div class="pn"><i class="ar" :class="p.a"></i><span v-fit="p.w">{{ p.n }}</span></div>
                <div class="pv2" :class="{ b: p.b }"><span v-if="p.v" v-fit="p.vw!">{{ p.v }}</span></div>
              </div>
            </div>
            <div class="sb"><i class="ua"></i><b class="th2"></b><i class="tri"></i></div>
          </div>
          <div class="split"><i></i></div>
          <div class="desc"><h4><span v-fit="67">Before Print</span></h4><p><span v-fit="402">Gets or sets the name of the script used to handle the XRControl.BeforePrint event.</span></p></div>
          <div class="ptabs">
            <div class="pt on f"><svg class="ico" viewBox="0 0 16 16" v-html="icons.pgrid"></svg><span v-fit="65">Property Grid</span></div>
            <div class="pt off"><svg class="ico" viewBox="0 0 16 16" v-html="icons.gallery"></svg><span v-fit="69">Report Gallery</span></div>
          </div>
        </div>
      </section>
    </main>
    <footer class="foot"></footer>

    <svg class="over" width="1920" height="1033">
      <defs><filter id="sh" x="-5%" y="-20%" width="110%" height="140%"><feDropShadow dx="1" dy="1.500" stdDeviation="1" flood-color="#400" flood-opacity=".55" /></filter></defs>
      <rect x="926.500" y="431.500" width="288" height="50.500" fill="none" stroke="#6f93bf" />
      <rect x="920" y="455" width="5" height="5" fill="#6f93bf" /><rect x="1216" y="455" width="5" height="5" fill="#6f93bf" />
      <g filter="url(#sh)" fill="none" stroke="#f23d3d" stroke-width="4">
        <rect x="907" y="420.500" width="332" height="88" rx="3" />
        <rect x="39.500" y="804.500" width="104.500" height="36" rx="3" />
        <rect x="1301.500" y="662.500" width="267.500" height="40" rx="3" />
        <rect x="1589" y="665.500" width="299" height="36" rx="3" />
        <path d="M113 797L880 523M1238 521L1358 643" />
        <path d="M898 516L877 532L879 523L872 515ZM1371 655L1349 644L1358 641L1360 632ZM1597 660L1573 665L1580 657L1575 648Z" fill="#f23d3d" stroke="none" />
      </g>
      <g filter="url(#sh)">
        <text x="752" y="630" class="note" textLength="503" lengthAdjust="spacingAndGlyphs">Chọn những control để áp dụng script</text>
      </g>
      <path d="M549.500 100V115L553 112L556 118L558.500 117L556 111.500H560.500Z" fill="#fff" stroke="#111" />
    </svg>
  </div>
</template>

<style>
body { margin: 0; overflow: hidden; }
</style>
<style scoped>
.app { --ui: "Noto Sans", "Open Sans", sans-serif; position: relative; width: 1920px; height: 1033px; display: flex; flex-direction: column; background: #ebecf0; font: 11px/14px var(--ui); word-spacing: 1px; color: #1d1d33; overflow: hidden; }
.app * { box-sizing: border-box; }
.app span { white-space: pre; }
.ico { width: 16px; height: 16px; flex: none; display: block; overflow: visible; }
.tri { width: 0; height: 0; border: 4px solid transparent; border-top-color: #777989; border-bottom: 0; flex: none; }
.tri.k { border-width: 4px 3.500px 0; border-top-color: #15152a; }
.tri.lt { border-top-color: #b9bac4; }
.title { height: 23px; flex: none; display: flex; align-items: center; background: linear-gradient(#e3e4e8, #d8d9de); border-bottom: 1px solid #a8a9b9; padding-left: 2px; }
.appico { width: 16px; height: 17px; }
.tt { font-size: 12px; font-weight: 700; color: #a6a9b6; margin-left: 4px; line-height: 20px; margin-top: 1px; }
.winbtns { margin-left: auto; display: flex; gap: 2px; padding-right: 1px; margin-top: 0; }
.winbtns span { width: 29px; height: 15px; border: 1px solid #a9aab6; border-radius: 3px; background: linear-gradient(#ececf0, #d6d7dd); display: flex; justify-content: center; align-items: center; }
.winbtns svg { width: 16px; height: 14px; }
.menu { height: 28px; flex: none; display: flex; align-items: center; padding-left: 5px; padding-bottom: 2px; font-size: 15px; }
.menu .grip { margin: 0 13px 0 0; }
.mi { line-height: 22px; }
.marrow { margin-left: auto; margin-right: 6px; border-width: 3.500px; border-bottom: 0; }
.grip { width: 5px; height: 17px; flex: none; border: solid #c9cad2; border-width: 0 1px; background: linear-gradient(90deg, transparent 1px, #c9cad2 1px, #c9cad2 2px, transparent 2px); }
.bars { display: flex; gap: 4px; height: 34px; flex: none; padding-left: 2px; }
.bars.low { height: 32px; }
.bar { display: flex; align-items: center; height: 32px; padding-bottom: 2px; border-radius: 3px; background: linear-gradient(#fff 30%, #f1f1f5); box-shadow: 0 1px 1px #aaabb8, 1px 0 1px #c5c6d0; font-size: 15px; }
.low .bar { height: 29px; }
.bar .grip { margin-left: 3px; height: 16px; }
.b1 { width: 609px; } .b2 { width: 508px; } .b3 { width: 682px; } .b4 { width: 165px; }
.slot { display: flex; align-items: center; justify-content: center; flex: none; height: 22px; }
.b1 .grip { margin-right: 6px; }
.b3 .grip { margin-right: 6px; }
.slot.l { justify-content: flex-start; line-height: 20px; }
.slot.s { width: 7px; background: linear-gradient(#fff0, #c4c5ce, #fff0) center / 1px 100% no-repeat; }
.strip { width: 15px; align-self: stretch; margin: 0 0 -2px auto; flex: none; border-left: 1px solid #b9bac6; background: linear-gradient(#fff, #d9dae2 60%, #e6e6ec); border-radius: 0 3px 3px 0; display: flex; align-items: center; justify-content: center; }
.combo { display: flex; align-items: center; justify-content: space-between; height: 20px; background: #fff; border: 1px solid #b9bac6; border-top-color: #9a9bac; font-size: 11px; padding: 0 5px 0 4px; flex: none; }
.fc { width: 120px; margin-left: 12px; } .sc { width: 55px; margin-left: 8px; }
.fmt { color: #82849a; font-size: 19px; line-height: 22px; flex: none; }
.bb { font: 700 17px/22px "DejaVu Serif", serif; width: 15px; margin-left: 10px; display: inline-block; }
.ii { font: italic 700 17px/22px "DejaVu Serif", serif; margin-left: 14px; width: 10px; display: inline-block; }
.uu { font-weight: 600; font-size: 17px; text-decoration: underline; text-underline-offset: 3px; margin-left: 14px; width: 13px; }
.s1 { margin-left: 7px; width: 6px !important; }
.aa { font-size: 15px; font-weight: 600; line-height: 14px; border-bottom: 2px solid #82849a; margin-left: 6px; width: 14px; text-align: center; margin-top: -1px; }
.m1 { margin-left: 11px; } .hl { margin-left: 11px; } .m2 { margin-left: 10px; } .s2 { margin-left: 6px; width: 5px !important; }
.al { width: 26px; height: 26px; display: flex; align-items: center; justify-content: center; flex: none; }
.on.al { width: 24px; margin: 0 1px; background: linear-gradient(#fff0, #c9cad4 50%, #fff0); border: solid #9a9bac; border-width: 0 1px; border-image: linear-gradient(#fff0, #8f90a2, #fff0) 1; }
.s2 + .al { margin-left: 2px; }
.zm { margin-left: 13px; } .zc { width: 70px; margin-left: 9px; background: #ebecf0; color: #9a9ba8; padding-left: 5px; } .zp { margin-left: 9px; }
.zc span { font-size: 11px; }

.main { display: flex; height: 883px; flex: none; }
.toolbox { width: 35px; height: 507px; margin-left: 1px; background: linear-gradient(90deg, #fff 30%, #f1f1f5); border-radius: 3px; box-shadow: 1px 1px 1px #aaabb8; display: flex; flex-direction: column; align-items: center; padding: 3px 1px 0 0; }
.vgrip { width: 16px; height: 5px; flex: none; border: solid #c9cad2; border-width: 1px 0; background: linear-gradient(transparent 1px, #c9cad2 1px, #c9cad2 2px, transparent 2px); margin-bottom: 9px; }
.tool { width: 27px; height: 22px; display: flex; align-items: center; justify-content: center; flex: none; }
.tool.on { height: 20px; background: linear-gradient(90deg, #fff0, #cfd0da 50%, #fff0); border: solid; border-width: 1px 0; border-image: linear-gradient(90deg, #fff0, #8f90a2, #fff0) 1; }
.tsep { width: 22px; height: 1px; flex: none; margin: 2px 0 4px; background: linear-gradient(90deg, #fff0, #b5b6c0, #fff0); }
.tsep.first { margin-top: 4px; margin-bottom: 3px; }
.lblA { font-size: 17px; font-weight: 600; color: #82849a; }
.center { width: 1247px; margin-left: 3px; display: flex; flex-direction: column; }
.tabs { height: 22px; flex: none; display: flex; padding-left: 3px; align-items: center; }
.tab { width: 96px; height: 23px; align-self: flex-start; background: #ebecf0; border: 1px solid #9a9cab; border-bottom: 0; position: relative; z-index: 1; display: flex; align-items: center; padding-left: 8px; color: #85879a; }
.tab .x { margin-left: auto; width: 15px; margin-right: 3px; }
.darrow { margin-left: auto; margin-right: 11px; margin-top: -3px; }
.doc { height: 702px; flex: none; border: 1px solid #9a9cab; display: flex; flex-direction: column; background: #ebecf0; }
.hr { display: flex; padding: 17px 0 0 17px; height: 48px; flex: none; }
.corner { width: 15px; height: 15px; background: #fff; border: 1px solid #c3c4cb; flex: none; }
.hruler { margin-left: 19px; }
.hruler text, .vruler text { font: 9.500px "Liberation Sans", sans-serif; fill: #82849a; }
.canvas { display: flex; flex: 1; min-height: 0; padding-left: 17px; }
.vruler { width: 14px; display: flex; flex-direction: column; padding-top: 1px; }
.vruler svg { display: block; flex: none; overflow: visible; }
.page { width: 1124px; height: 509px; margin-left: 18px; border: 1px solid #9a9cab; box-shadow: 0 2px 14px rgba(60, 60, 75, .5); background: #fff; display: flex; flex-direction: column; }
.page > div { flex: none; }
.blue { height: 97px; background: #3f48cc; border-bottom: 1px solid #46599a; display: flex; font: 700 40px/48px "Liberation Serif", serif; color: #fff; border-left: 1px dashed #6d7088; }
.logo { width: 143px; border-right: 1px solid #313795; padding: 3px 0 0 4px; height: 96px; }
.logo svg { display: block; overflow: visible; }
.bl1 { width: 637px; height: 55px; border: 1px solid #313795; line-height: 45px; padding-left: 1px; }
.bl2 { width: 595px; height: 41px; border: 1px solid #313795; line-height: 44px; padding-left: 1px; }
.sky { height: 54px; background: #87cefa; border-bottom: 1px solid #5a7a94; border-left: 1px dashed #6d7088; font: 700 40px/44px "Liberation Serif", serif; color: #fff; padding-left: 286px; }
.band { height: 21px; background: #f2f2f2; border: solid #b4b4b8; border-width: 1px 0; display: flex; align-items: center; color: #6d6e78; font-size: 12px; }
.band i { border: 4px solid transparent; border-top: 7px solid #6b6b74; border-bottom: 0; margin: 0 5px 0 6px; }
.band .ico { margin-right: 3px; }
.band b { margin-left: auto; width: 11px; height: 11px; border: 1px solid #6e7080; background: #fff; font-size: 9px; line-height: 8px; text-align: center; }
.row { display: grid; grid-template-columns: 408px 181px 249px 283px; border-left: 1px dashed #6d7088; }
.row > div { position: relative; display: flex; justify-content: center; border-right: 1px solid rgba(0, 80, 80, .4); }
.row > div:last-child { border-right: 0; }
.teal { height: 51px; background: #00c0c0; border-top: 1px solid #0c8a8a; border-bottom: 1px solid #0c8a8a; font: 700 33.330px/50px "Liberation Serif", serif; color: #fff; }
.cyan { height: 48px; background: #c0ffff; border-bottom: 1px dashed #7f9999; font: 26.670px/49px "Liberation Serif", serif; color: #808080; }
.cyan span { margin-left: -1px; }
.cyan > div:first-child { justify-content: flex-start; }
.db { position: absolute; right: 0; top: 0; width: 13px; height: 13px; }
.paper { flex: 1 !important; border-left: 1px dashed #6d7088; background:
  repeating-linear-gradient(90deg, transparent 0 47px, #dedee2 47px 48px), repeating-linear-gradient(transparent 0 47px, #dedee2 47px 48px),
  repeating-linear-gradient(90deg, transparent 0 11px, #eeeef1 11px 12px), repeating-linear-gradient(transparent 0 11px, #eeeef1 11px 12px), #fff; }
.status { height: 31px; flex: none; border-top: 1px solid #bfc0c8; background: linear-gradient(#dcdde1, #c5c6cc); display: flex; align-items: center; padding-left: 3px; padding-bottom: 2px; font-size: 15px; }
.dbtn { width: 87px; height: 28px; display: flex; align-items: center; padding-left: 4px; gap: 3px; border: solid; border-width: 0 1px; border-image: linear-gradient(#fff0, #8f90a2, #fff0) 1; line-height: 20px; }
.vs { width: 1px; height: 22px; background: linear-gradient(#fff0, #a9aab4, #fff0); flex: none; }
.dbtn + .vs { margin-left: 5px; }
.st { line-height: 20px; flex: none; }
.pv { margin-left: 7px; } .w1 { width: 61px; margin-left: 4px; }
.ht { margin-left: 0; } .w2 { width: 84px; margin-left: 4px; }
.sr { margin-left: 7px; } .w3 { width: 53px; margin-left: 4px; }
.w4 { margin-left: 11px; width: 662px; } .w5 { margin-left: 10px; width: 36px; }
.slider { margin-left: 7px; }
.dock { border: 1px solid #9a9cab; background: #ebecf0; display: flex; flex-direction: column; box-shadow: inset 0 0 0 1px #f5f5f8; }
.phead { height: 21px; flex: none; margin: 0 1px; padding: 1px 4px 1px 4px; display: flex; align-items: center; font-weight: 700; font-size: 11px; color: #a6a9b6; background: linear-gradient(#e3e4e8, #e6e7eb); border-bottom: 1px solid #bcbdc8; }
.phead .ico { width: 15px; height: 15px; }
.phead .ico:nth-child(2) { margin-left: auto; }
.phead .ico { margin-right: 0; } .phead .p { margin-right: 8px; } .phead .m { margin-right: 8px; }
.gs { margin-top: 3px; height: 155px; }
.gs .phead { height: 20px; padding-right: 5px; }
.gbar { height: 31px; margin: 1px 3px 0; background: linear-gradient(#fff 30%, #f1f1f5); border-radius: 3px; box-shadow: 0 1px 1px #aaabb8; display: flex; align-items: center; font-size: 15px; padding: 0 0 2px 8px; flex: none; }
.g1 { width: 87px; margin-left: 4px; } .q1 { margin-left: 14px; } .g2 { width: 73px; margin-left: 3px; }
.q2 { margin-left: 11px; } .g3 { width: 49px; margin-left: 4px; } .q3 { margin-left: 6px; } .g4 { width: 70px; margin-left: 3px; color: #a3a4ae; } .q4 { margin-left: 1px; } .g5 { margin-left: 3px; }
.gtable { height: 72px; flex: none; margin: 2px 1px 0; background: #fff; border: 1px solid #9a9cab; }
.tr { display: grid; grid-template-columns: 227px 92px 92px 92px 1fr; height: 19px; }
.tr > div { display: flex; align-items: center; padding-left: 3px; border: solid #d0d1d8; border-width: 0 1px 1px 0; }
.tr.th { height: 20px; background: linear-gradient(#f8f8fb, #ecedf1); border-bottom: 1px solid #c5c6ce; }
.tr.th > div { border-bottom: 0; padding-bottom: 1px; }
.r1 > div:nth-child(n+2) { background: #eeeff2; }
.r1 .tri { margin-left: auto; margin-right: 5px; }
.r2 > div:first-child { margin-left: 18px; border-left-width: 1px; }
.tr > div:has(.cb) { justify-content: center; padding: 0; }
.cb { width: 13px; height: 13px; border: 1px solid #9a9cab; background: #fff; box-shadow: inset 0 0 0 2px #d9dae2; }
.ptabs { flex: 1; display: flex; margin: 1px 1px; min-height: 0; }
.pt { display: flex; align-items: center; padding-bottom: 4px; }
.pt.on { margin-left: 2px; border-left: 1px solid #a9aab6; padding-left: 10px; gap: 3px; }
.pt.on.e { width: 118px; } .pt.on.f { width: 106px; } .pt.on.g { width: 115px; }
.pt.off { flex: 1; border-left: 1px solid #9a9cab; border-top: 1px solid #9a9cab; background: linear-gradient(#c3c4cb, #ebecf0 85%); padding-left: 11px; gap: 3px; -webkit-mask: linear-gradient(90deg, #000 50%, #0006 100%); }
.right { width: 629px; margin-left: 3px; display: flex; flex-direction: column; gap: 4px; }
.re { height: 254px; flex: none; }
.tree { height: 203px; flex: none; display: flex; margin: -1px 1px 0; background: #fff; border: 1px solid #9a9cab; }
.nodes { flex: 1; }
.node { height: 18px; display: flex; align-items: center; }
.node .ico { margin-left: 4px; }
.nt { flex: 1; height: 18px; display: flex; align-items: center; padding: 0 0 1px 4px; }
.nt.sel { background: #eeeff2; }
.ar { width: 14px; height: 12px; margin-left: 0; display: flex; align-items: center; justify-content: center; flex: none; }
.node .ar { margin-left: 1px; }
.ar.d::after { content: ""; border: 3.500px solid transparent; border-top: 4px solid #777989; border-bottom: 0; margin-top: 2px; }
.ar.r::after { content: ""; border: 3.500px solid transparent; border-left: 4px solid #82849a; border-right: 0; }
.sb { width: 17px; background: #f3f3f6; display: flex; flex-direction: column; align-items: center; flex: none; }
.sb .ua { border: 3px solid transparent; border-bottom: 4px solid #777989; border-top: 0; margin-top: 6px; }
.sb .tri { margin-top: auto; margin-bottom: 7px; border-width: 3.500px; border-bottom: 0; }
.sb b { width: 7px; border: 1px solid #a0a1b0; border-radius: 4px; background: linear-gradient(90deg, #f4f4f8, #d6d7e0); }
.th1 { height: 114px; margin-top: 7px; }
.th2 { height: 120px; margin-top: 121px; }
.pg { height: 624px; flex: none; }
.obj { height: 25px; flex: none; margin: -1px 1px 0; background: #fff; border: 1px solid #bcbdc8; border-top-color: #9a9cab; display: flex; align-items: center; font-weight: 700; font-size: 14px; line-height: 22px; padding: 2px 4px 0 3px; }
.o1 { width: 98px; } .obj .tri { margin: -2px 0 0 auto; border-width: 4px; border-bottom: 0; }
.pbar { height: 28px; flex: none; margin: 2px 2px 2px 3px; background: linear-gradient(#fff 20%, #f1f1f5); border-radius: 3px; box-shadow: 0 1px 1px #aaabb8; display: flex; align-items: center; padding-left: 6px; }
.pbar .on.al { margin-left: 6px; padding-left: 4px; }
.grid { height: 391px; flex: none; margin: 0 1px; border: 1px solid #9a9cab; display: flex; background: #f3f3f6; }
.rows { flex: 1; }
.pr { display: grid; grid-template-columns: 304px 1fr; }
.pr > div { display: flex; align-items: center; border-bottom: 1px solid #d9dae0; }
.pr:first-child > div { padding-bottom: 1px; }
.pn { background: #f8f8fb; border-right: 1px solid #d0d1d8; }
.pn .ar { width: 14px; margin-right: 4px; }
.c .pn .ar { margin-right: 19px; }
.pv2 { background: #fff; padding-left: 4px; border-right: 1px solid #d0d1d8; }
.pv2.b { font-weight: 700; }
.sel .pn { background: #e1e9ff; }
.split { height: 5px; display: flex; justify-content: center; align-items: center; flex: none; }
.split i { width: 14px; height: 2px; background: repeating-linear-gradient(90deg, #8b8da0 0 1px, transparent 1px 2px); }
.desc { height: 121px; flex: none; margin: 0 1px; border: 1px solid #c3c4cb; border-radius: 3px; padding: 7px 6px; }
.desc h4 { margin: 0; font-size: 11px; line-height: 14px; } .desc p { margin: 7px 0 0; line-height: 14px; }
.foot { flex: 1; margin-top: 2px; border-top: 1px solid #b9bac4; background: linear-gradient(#dcdde1, #c5c6cc); border-bottom: 1px solid #a9b0c4; }
.over { position: absolute; left: 0; top: 0; pointer-events: none; }
.note { font: 700 26px "Liberation Sans", sans-serif; word-spacing: 0; fill: #fff; stroke: #f23d3d; stroke-width: 5px; paint-order: stroke; stroke-linejoin: round; }
</style>
